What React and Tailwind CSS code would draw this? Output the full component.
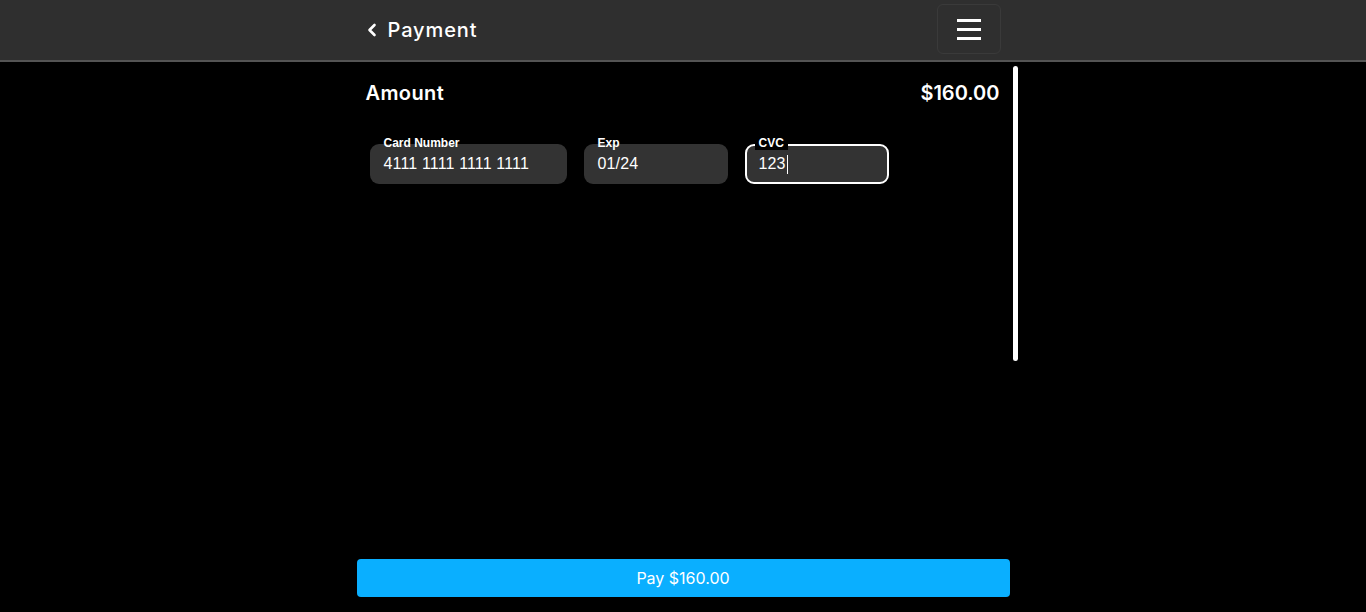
import React from "react";

const poppins = { fontFamily: "Inter, 'Open Sans', sans-serif" };

function Field({ label, value, width, focused }) {
  return (
    <div className={`relative ${width} h-[40px]`}>
      <div
        className={`h-full rounded-[9px] bg-[#333333] flex items-center px-[12px] ${
          focused ? "border-2 border-white" : "pl-[14px]"
        }`}
      >
        <span className="text-[16px] tracking-[0.15px] text-white font-['Liberation_Sans',Arial,sans-serif] flex items-center">
          {value}
          {focused && <span className="inline-block w-[1px] h-[19px] bg-white ml-[1px]" />}
        </span>
      </div>
      <span
        className={`absolute -top-[8px] left-[10px] px-[4px] text-[12px] leading-[14px] font-bold text-white font-['Liberation_Sans',Arial,sans-serif] ${
          focused ? "bg-black" : ""
        }`}
      >
        {label}
      </span>
    </div>
  );
}

export default function App() {
  return (
    <div className="h-screen w-full bg-black flex flex-col overflow-hidden" style={poppins}>
      <header className="h-[62px] bg-[#2f2f2f] border-b-2 border-[#545454] shrink-0">
        <div className="w-[653px] mx-auto h-full flex items-center justify-between pl-[10px] pr-[9px]">
          <div className="flex items-center gap-[11px] text-white">
            <svg width="10" height="14" viewBox="0 0 10 14" fill="none">
              <path d="M7.5 2 L2.5 7 L7.5 12" stroke="white" strokeWidth="2.6" strokeLinecap="round" strokeLinejoin="round" />
            </svg>
            <span className="text-[20px] font-medium tracking-[0.9px]">Payment</span>
          </div>
          <button className="w-[64px] h-[50px] -mt-[2px] rounded-[6px] border border-[#3a3a3a] flex flex-col items-center justify-center gap-[6px]">
            <span className="block w-[24px] h-[3px] bg-white" />
            <span className="block w-[24px] h-[3px] bg-white" />
            <span className="block w-[24px] h-[3px] bg-white" />
          </button>
        </div>
      </header>

      <main className="flex-1 relative">
        <div className="w-[653px] mx-auto relative h-full">
          <div className="absolute right-[-8px] top-[4px] w-[5px] h-[295px] rounded-full bg-white" />
          <div className="flex items-center justify-between pl-[9px] pr-[10px] pt-[16px] text-white">
            <span className="text-[20px] font-semibold tracking-[0.4px]">Amount</span>
            <span className="text-[20px] font-semibold">$160.00</span>
          </div>
          <div className="flex gap-[17px] pl-[13px] mt-[36px]">
            <Field label="Card Number" value="4111 1111 1111 1111" width="w-[197px]" />
            <Field label="Exp" value="01/24" width="w-[144px]" />
            <Field label="CVC" value="123" width="w-[144px]" focused />
          </div>
        </div>
      </main>

      <div className="w-[653px] mx-auto mb-[15px] shrink-0">
        <button className="w-full h-[38px] rounded-[4px] bg-[#0aafff] text-white text-[16px]">
          Pay $160.00
        </button>
      </div>
    </div>
  );
}
